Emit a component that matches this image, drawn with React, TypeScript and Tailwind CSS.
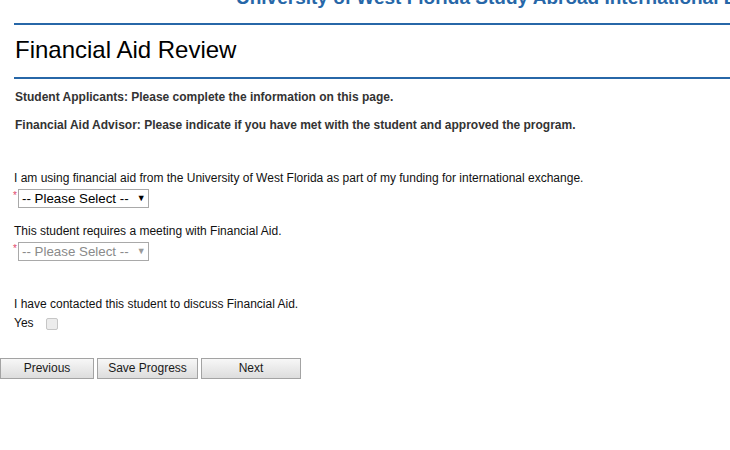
import React from 'react';

function SelectBox({ disabled }: { disabled?: boolean }) {
  return (
    <div className="flex items-start">
      <span className="text-[10px] leading-[10px] text-[#e0466a] mt-[2px] w-[5px]">*</span>
      <div
        className={`flex items-center w-[131px] h-[19px] border border-[#a9a9a9] bg-white pl-[3px] text-[13.33px] leading-[17px] ${
          disabled ? 'text-[#8a8a8a]' : 'text-black'
        }`}
      >
        <span>-- Please Select --</span>
        <span className={`ml-[8px] text-[9px] ${disabled ? 'text-[#9a9a9a]' : 'text-black'}`}>▼</span>
      </div>
    </div>
  );
}

function NavButton({ label, width }: { label: string; width: string }) {
  return (
    <button
      className={`${width} h-[21px] border border-[#a3a3a3] bg-gradient-to-b from-[#f7f7f7] to-[#dddddd] text-[12px] leading-[19px] text-[#1a1a1a]`}
    >
      {label}
    </button>
  );
}

export default function App() {
  return (
    <div className="w-[730px] h-[450px] overflow-hidden bg-white text-[12px] text-[#222] font-['Liberation_Sans',Arial,sans-serif]">
      {/* Page heading, scrolled partly out of view */}
      <div className="h-[23px] overflow-hidden">
        <div className="mt-[-14px] pl-[236px] whitespace-nowrap text-[19px] leading-[23px] font-bold text-[#2767a8]">
          University of West Florida Study Abroad International Exchange Program
        </div>
      </div>

      <div className="pl-[14px]">
        <div className="h-[2px] bg-[#2767a8]" />
        <h1 className="pl-[1px] pt-[11px] pb-[14px] text-[24px] leading-[27px] text-black">Financial Aid Review</h1>
        <div className="h-[2px] bg-[#2767a8]" />

        <div className="pl-[1px] pt-[11px] font-bold text-[#333]">
          <p className="leading-[14px]">Student Applicants: Please complete the information on this page.</p>
          <p className="leading-[14px] mt-[14px]">Financial Aid Advisor: Please indicate if you have met with the student and approved the program.</p>
        </div>

        <div className="mt-[39px] text-[#111]">
          <p className="leading-[14px]">I am using financial aid from the University of West Florida as part of my funding for international exchange.</p>
          <div className="mt-[4px] ml-[-1px]">
            <SelectBox />
          </div>

          <p className="leading-[14px] mt-[16px]">This student requires a meeting with Financial Aid.</p>
          <div className="mt-[4px] ml-[-1px]">
            <SelectBox disabled />
          </div>

          <p className="leading-[14px] mt-[36px]">I have contacted this student to discuss Financial Aid.</p>
          <label className="flex items-center gap-[12px] mt-[5px]">
            <span className="leading-[14px]">Yes</span>
            <input
              type="checkbox"
              disabled
              className="appearance-none w-[12px] h-[12px] mt-[2px] rounded-[2px] border border-[#c6c6c6] bg-[#ececec]"
            />
          </label>
        </div>
      </div>

      <div className="flex gap-[3px] mt-[28px]">
        <NavButton label="Previous" width="w-[94px]" />
        <NavButton label="Save Progress" width="w-[101px]" />
        <NavButton label="Next" width="w-[100px]" />
      </div>
    </div>
  );
}
